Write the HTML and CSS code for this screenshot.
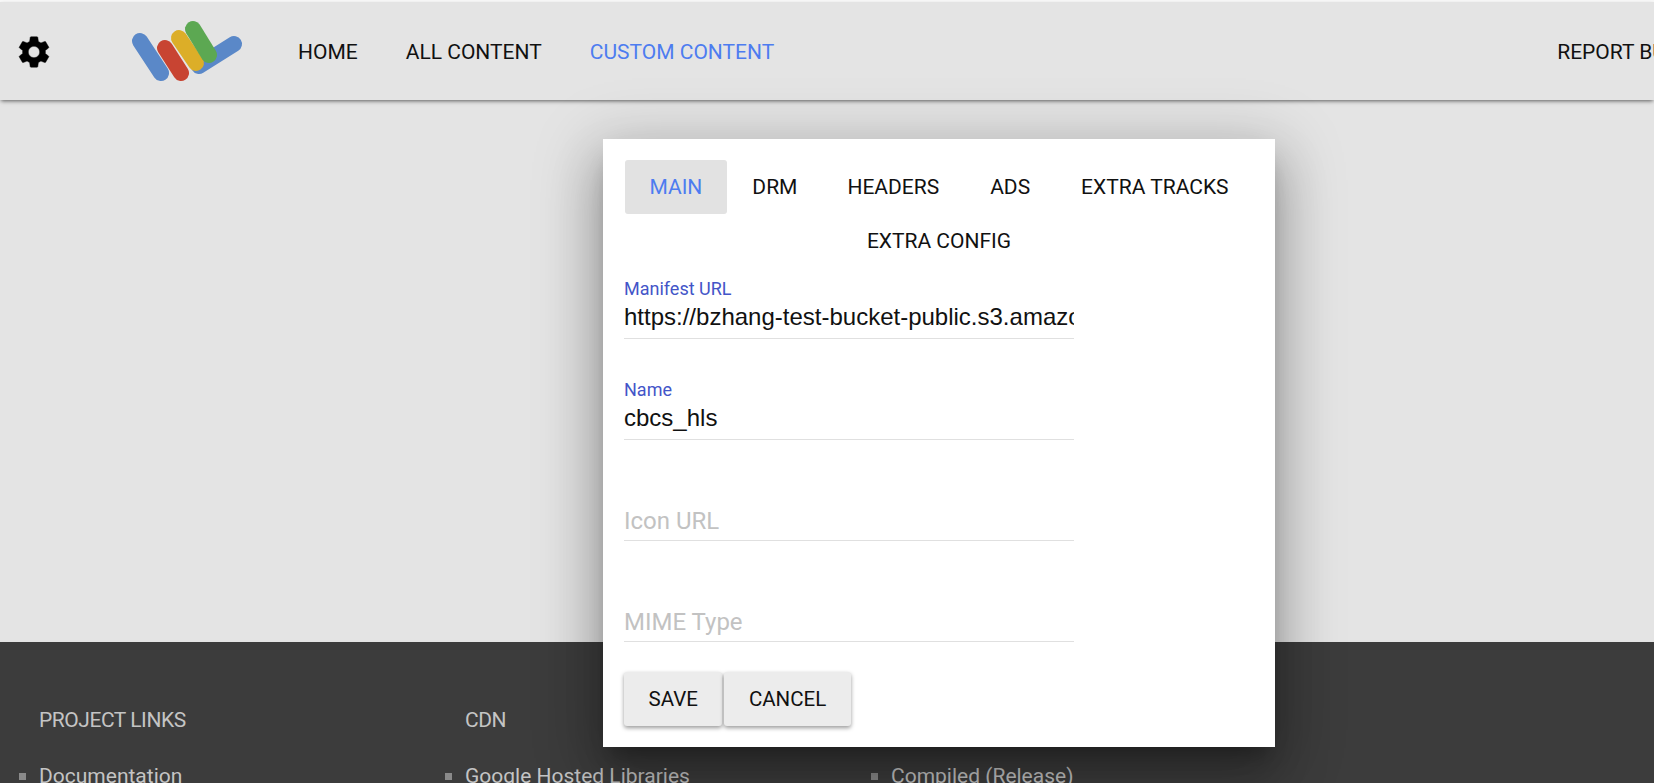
FILE: index.html
```html
<!doctype html>
<html>
<head>
<meta charset="utf-8">
<title>Shaka Player Demo</title>
<link rel="stylesheet" href="styles.css">
</head>
<body>
<div class="page">
  <div class="topbar">
    <svg class="gear" viewBox="0 0 24 24"><path stroke="#000" stroke-width=".3" d="M19.14 12.94c.04-.3.06-.61.06-.94 0-.32-.02-.64-.07-.94l2.03-1.58c.18-.14.23-.41.12-.61l-1.92-3.32c-.12-.22-.37-.29-.59-.22l-2.39.96c-.5-.38-1.03-.7-1.62-.94l-.36-2.54c-.04-.24-.24-.41-.48-.41h-3.84c-.24 0-.43.17-.47.41l-.36 2.54c-.59.24-1.13.57-1.62.94l-2.39-.96c-.22-.08-.47 0-.59.22L2.74 8.87c-.12.21-.08.47.12.61l2.03 1.58c-.05.3-.09.63-.09.94s.02.64.07.94l-2.03 1.58c-.18.14-.23.41-.12.61l1.92 3.32c.12.22.37.29.59.22l2.39-.96c.5.38 1.03.7 1.62.94l.36 2.54c.05.24.24.41.48.41h3.84c.24 0 .44-.17.47-.41l.36-2.54c.59-.24 1.13-.56 1.62-.94l2.39.96c.22.08.47 0 .59-.22l1.92-3.32c.12-.22.07-.47-.12-.61l-2.01-1.58zM12 15.6c-1.98 0-3.6-1.62-3.6-3.6s1.62-3.6 3.6-3.6 3.6 1.62 3.6 3.6-1.62 3.6-3.6 3.6z"/></svg>
    <svg class="logo" viewBox="0 0 116 64" fill="none" stroke-width="16" stroke-linecap="round">
      <line x1="9" y1="21" x2="30" y2="53" stroke="#5a88c8"/>
      <line x1="103" y1="24" x2="68" y2="46" stroke="#5a88c8"/>
      <line x1="34" y1="28" x2="50" y2="53" stroke="#c84432"/>
      <line x1="48" y1="18" x2="65" y2="43" stroke="#dcae28"/>
      <line x1="62" y1="9" x2="78" y2="35" stroke="#5ca852"/>
    </svg>
    <a class="navlink">HOME</a>
    <a class="navlink">ALL CONTENT</a>
    <a class="navlink active">CUSTOM CONTENT</a>
    <a class="navlink report">REPORT BUG</a>
  </div>

  <div class="content"></div>

  <div class="footer">
    <div class="footcol">
      <h3>PROJECT LINKS</h3>
      <ul><li>Documentation</li></ul>
    </div>
    <div class="footcol">
      <h3>CDN</h3>
      <ul><li>Google Hosted Libraries</li></ul>
    </div>
    <div class="footcol">
      <h3>&nbsp;</h3>
      <ul><li>Compiled (Release)</li></ul>
    </div>
  </div>
</div>

<div class="dialog">
  <div class="tabs">
    <button class="tab selected">MAIN</button>
    <button class="tab">DRM</button>
    <button class="tab">HEADERS</button>
    <button class="tab wide">ADS</button>
    <button class="tab">EXTRA TRACKS</button>
    <button class="tab">EXTRA CONFIG</button>
  </div>
  <div class="field first">
    <label>Manifest URL</label>
    <input type="text" value="https://bzhang-test-bucket-public.s3.amazonaws.com/cbcs/master.m3u8">
  </div>
  <div class="field">
    <label>Name</label>
    <input type="text" value="cbcs_hls">
  </div>
  <div class="field">
    <input class="empty" type="text" placeholder="Icon URL">
  </div>
  <div class="field">
    <input class="empty" type="text" placeholder="MIME Type">
  </div>
  <div class="actions">
    <button class="btn">SAVE</button>
    <button class="btn">CANCEL</button>
  </div>
</div>
</body>
</html>
```

FILE: styles.css
```css
html, body {
	margin: 0;
	height: 100%;
	overflow: hidden;
}
body {
	font-family: Roboto, "Liberation Sans", sans-serif;
	background: #f8f8f8;
	color: #111;
}
.page {
	height: 783px;
	display: flex;
	flex-direction: column;
}
.topbar {
	position: relative;
	height: 98px;
	box-sizing: border-box;
	margin-top: 2px;
	flex: none;
	display: flex;
	align-items: center;
	padding: 1px 0 0 15px;
	background: #e4e4e4;
	box-shadow: 0 2px 4px -1px rgba(0,0,0,.6);
	white-space: nowrap;
	overflow: hidden;
}
.gear {
	width: 38px;
	height: 38px;
	flex: none;
	margin-right: 78px;
}
.logo {
	width: 116px;
	height: 64px;
	flex: none;
	margin-right: 51px;
}
.navlink {
	font-size: 21px;
	margin-right: 48px;
	color: #111;
}
.navlink.active {
	color: #4d7cf0;
}
.report {
	margin-left: 735px;
	margin-right: 0;
}
.content {
	flex: 1;
	background: #e4e4e4;
}
.footer {
	height: 141px;
	flex: none;
	background: #3c3c3c;
	display: flex;
	padding-left: 39px;
	color: #c4c4c4;
	overflow: hidden;
}
.footcol {
	width: 426px;
	flex: none;
}
.footcol h3 {
	margin: 65px 0 30px;
	font-size: 21px;
	line-height: 26px;
	font-weight: 400;
	letter-spacing: -.45px;
}
.footcol ul {
	margin: 0;
	padding: 0;
	list-style: none;
}
.footcol li {
	font-size: 21px;
	line-height: 26px;
	position: relative;
}
.footcol li::before {
	content: "";
	position: absolute;
	left: -20px;
	top: 10px;
	width: 7px;
	height: 7px;
	background: #8a8a8a;
}
.dialog {
	position: absolute;
	left: 603px;
	top: 139px;
	width: 672px;
	height: 608px;
	padding: 21px 21px 0;
	box-sizing: border-box;
	background: #fff;
	box-shadow: 0 31px 49px 4px rgba(0,0,0,.2), 0 12px 60px 10px rgba(0,0,0,.18), 0 14px 20px -9px rgba(0,0,0,.28);
}
.tabs {
	display: flex;
	flex-wrap: wrap;
	justify-content: center;
	height: 108px;
}
.tab {
	height: 54px;
	margin: 0 .5px;
	padding: 0 24.5px;
	border: 0;
	border-radius: 3px;
	background: none;
	font: 400 21px Roboto, sans-serif;
	color: #111;
}
.tab.wide {
	margin: 0 1.5px;
}
.tab.selected {
	background: #e2e2e2;
	color: #4d7cf0;
}
.field {
	width: 450px;
	height: 101px;
	box-sizing: border-box;
	display: flex;
	flex-direction: column;
	justify-content: flex-end;
}
.field.first {
	height: 71px;
}
.field label {
	font-size: 18px;
	line-height: 20px;
	color: #4355c8;
}
.field input {
	height: 40px;
	box-sizing: border-box;
	flex: none;
	padding: 0 0 3px;
	border: 0;
	border-bottom: 1px solid #e0e0e0;
	outline: 0;
	font: 400 24px "Liberation Sans", sans-serif;
	color: #111;
	background: none;
}
.field input.empty {
	padding: 1px 0 0;
}
.field input::placeholder {
	font-family: Roboto, sans-serif;
	color: #c2c2c2;
}
.actions {
	display: flex;
	gap: 2px;
	margin-top: 30px;
}
.btn {
	height: 54px;
	padding: 0 24.5px;
	border: 0;
	border-radius: 3px;
	background: #ececec;
	font: 400 20.5px Roboto, sans-serif;
	color: #111;
	box-shadow: 0 2px 4px rgba(0,0,0,.4);
}
```
